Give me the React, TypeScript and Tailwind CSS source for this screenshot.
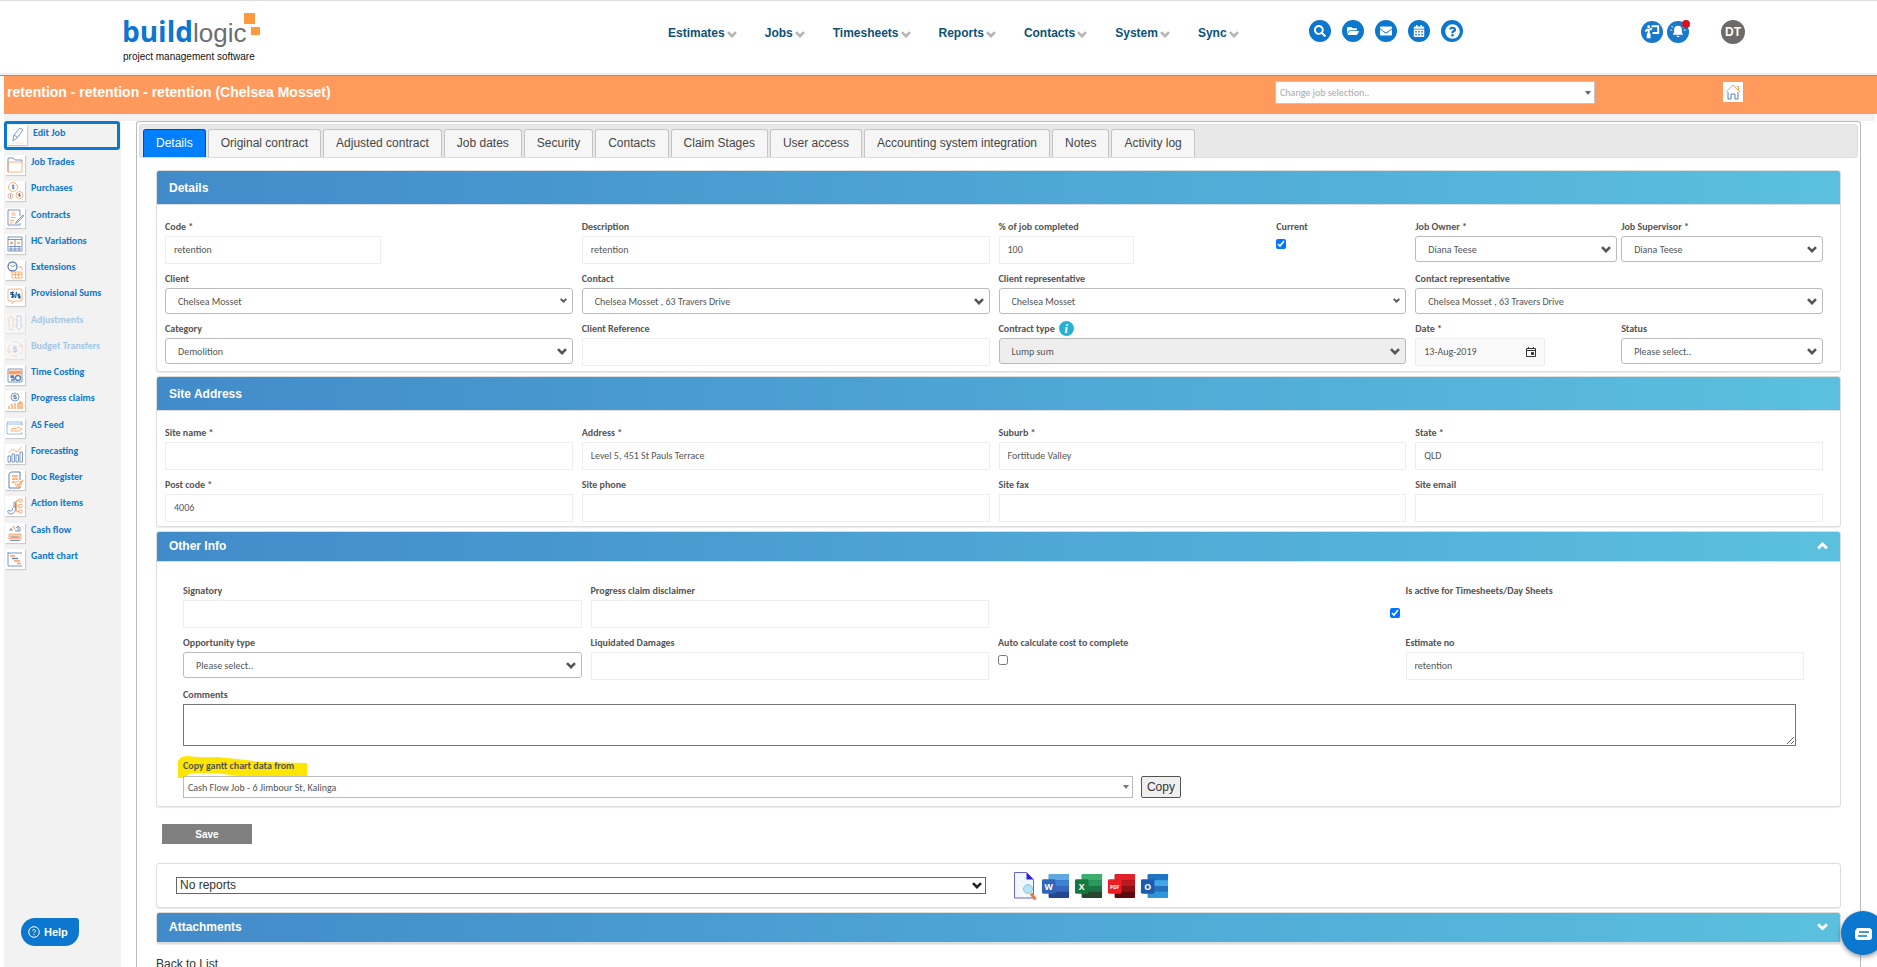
import type { ReactNode } from "react";
import clsx from "clsx";
import { FaSearch, FaFolderOpen, FaEnvelope, FaCalendarAlt, FaQuestionCircle } from "react-icons/fa";

const BLUE = "#5b7fb5";
const ORANGE = "#ff9d5c";

const menus = ["Estimates", "Jobs", "Timesheets", "Reports", "Contacts", "System", "Sync"];

const tabs = [
  "Details",
  "Original contract",
  "Adjusted contract",
  "Job dates",
  "Security",
  "Contacts",
  "Claim Stages",
  "User access",
  "Accounting system integration",
  "Notes",
  "Activity log",
];

const shortcuts = [
  { icon: <FaSearch />, title: "Search" },
  { icon: <FaFolderOpen />, title: "Files" },
  { icon: <FaEnvelope />, title: "Messages" },
  { icon: <FaCalendarAlt />, title: "Calendar" },
  { icon: <FaQuestionCircle className="text-[15px]" />, title: "Help" },
];

const sideLinks: { title: string; icon: ReactNode; disabled?: boolean }[] = [
  {
    title: "Job Trades",
    icon: (
      <>
        <path d="M3 17V3h5l2 2h7v2" stroke={BLUE} />
        <path d="M3 7h14v10H3z" stroke={ORANGE} />
      </>
    ),
  },
  {
    title: "Purchases",
    icon: (
      <>
        <circle cx="8" cy="6" r="4.500" stroke={ORANGE} />
        <circle cx="5.500" cy="15" r="2.500" stroke={ORANGE} />
        <circle cx="14.500" cy="14" r="3.500" stroke={ORANGE} />
        <path d="M9.500 4.500h-2v1.500h1.500v1.500h-2M8 3.500v5M5.500 13.500v3M14.500 12v4M15.500 13h-2v1h2v1h-2" stroke={BLUE} />
      </>
    ),
  },
  {
    title: "Contracts",
    icon: (
      <>
        <path d="M15 8V2H3v15h12v-2" stroke={BLUE} />
        <circle cx="8.500" cy="6" r="1.500" stroke={ORANGE} />
        <path d="M6 9.500h5M5 12.500h4M5 15h3" stroke={ORANGE} />
        <path d="M18 7l-6 6-1.500 2.500L13 14l5.500-6z" stroke={BLUE} />
      </>
    ),
  },
  {
    title: "HC Variations",
    icon: (
      <>
        <path d="M3 3h14v14H3zM3 5.500h14M10 6v11M4 12.500h12M4 15h12M6 12v5M14 12v5" stroke={BLUE} />
        <path d="M5 9h3M6.500 7.500v3M12 9h3" stroke={ORANGE} strokeWidth="1.500" />
      </>
    ),
  },
  {
    title: "Extensions",
    icon: (
      <>
        <circle cx="7.500" cy="6.500" r="4.500" stroke={BLUE} strokeWidth="1.300" />
        <path d="M5.500 5l2 2 3-2" stroke={BLUE} />
        <path d="M7 12h10v6H7zM7 14.500h10M10.500 12v6M13.500 12v6M13 7h4v3" stroke={ORANGE} />
      </>
    ),
  },
  {
    title: "Provisional Sums",
    icon: (
      <>
        <path d="M4 3h12l1 1v10l-1 1h-6l-3 2.500V15H4l-1-1V4z" stroke={ORANGE} />
        <path d="M9 6.500H6v2h3v2.500H6M7.500 5.500v6.500M11.500 6l-1 6M15 8.500h-2v1.500h2V12h-2M14 7.500v5" stroke="#1d5c96" strokeWidth="1.200" />
      </>
    ),
  },
  {
    title: "Adjustments",
    disabled: true,
    icon: (
      <>
        <path d="M6 3l3.500 4H8v9.500H4V7H2.500z" stroke={ORANGE} />
        <path d="M14 17l3.500-4H16V3h-4v10h-1.500z" stroke={BLUE} />
      </>
    ),
  },
  {
    title: "Budget Transfers",
    disabled: true,
    icon: (
      <>
        <path d="M4 13a6.500 6.500 0 0 1 1-7M16 6a6.500 6.500 0 0 1-1 9M5 15a6.500 6.500 0 0 0 7 2M15 5a6.500 6.500 0 0 0-7-2M2 11l2 3 2-2M14 8l2-3 2 3" stroke={ORANGE} />
        <path d="M12 8H8.500v2H12v2.500H8M10 6.500v7.500" stroke={BLUE} />
      </>
    ),
  },
  {
    title: "Time Costing",
    icon: (
      <>
        <path d="M3 4h14v13H3z" stroke={BLUE} />
        <path d="M4 6h12v3H4z" stroke={ORANGE} fill={ORANGE} />
        <path d="M9 11H6v1.500h3V15H6" stroke={BLUE} strokeWidth="1.300" />
        <circle cx="13" cy="13" r="2.500" stroke={BLUE} strokeWidth="1.300" />
      </>
    ),
  },
  {
    title: "Progress claims",
    icon: (
      <>
        <circle cx="10" cy="6" r="4" stroke={BLUE} />
        <path d="M11.500 4.500h-3V6h3v1.500h-3M10 3.500v5" stroke={BLUE} />
        <path d="M4 18v-3M7 18v-4l-1-1M10 18v-6M13 18v-5l2-2v7M17 18v-6l-1-1" stroke={ORANGE} strokeWidth="1.300" />
      </>
    ),
  },
  {
    title: "AS Feed",
    icon: (
      <>
        <path d="M17 8V4H2v12h15v-2M2 6h15" stroke="#86aed4" />
        <path d="M6 13h8l3-2-4-2-2 1.500H7z" stroke={ORANGE} />
      </>
    ),
  },
  {
    title: "Forecasting",
    icon: (
      <>
        <path d="M3 18v-6h2.500v6zM7 18v-8h2.500v8zM11 18v-7h2.500v7zM15 18V8h2.500v10z" stroke={BLUE} />
        <path d="M3.500 9L8 5l4 3 4.500-5" stroke={ORANGE} />
      </>
    ),
  },
  {
    title: "Doc Register",
    icon: (
      <>
        <path d="M15 10V2H6L4 4v14h11v-1" stroke="#3d6698" />
        <path d="M7 6h6M7 9h6M7 12h3" stroke={ORANGE} strokeWidth="1.500" />
        <circle cx="13.500" cy="14" r="3" stroke={ORANGE} />
        <path d="M12 14l1.500 1.500L18 10" stroke={ORANGE} strokeWidth="1.300" />
      </>
    ),
  },
  {
    title: "Action items",
    icon: (
      <>
        <path d="M14 3h3v3h-3zM14 8.500h3v3h-3zM14 14h3v3h-3zM14 4.500h-2.500v11H14M9 10h5" stroke={ORANGE} />
        <path d="M9 12V6.500c0-1 1.500-1 1.500 0V13c0 3-2 5-5 5-2 0-3.500-2-2.500-3.500l3 .5c1 0 2-1.500 1.500-3" stroke={BLUE} />
      </>
    ),
  },
  {
    title: "Cash flow",
    icon: (
      <>
        <path d="M5 8V6h2v2M13 3v5M11 5l2-2 2 2v3h-5" stroke={BLUE} />
        <path d="M7 5l2-2 1 4" stroke={ORANGE} />
        <path d="M4 11h12v5H4z" stroke={ORANGE} fill="#ffd3b5" />
        <path d="M6 14h8M5 17.500h10" stroke={BLUE} />
      </>
    ),
  },
  {
    title: "Gantt chart",
    icon: (
      <>
        <path d="M3 3v14h14M3 4h14" stroke={BLUE} />
        <path d="M5 7h5M9 12h6M12 14.500h4" stroke={ORANGE} strokeWidth="1.300" />
        <path d="M7 9.500h6" stroke={BLUE} strokeWidth="1.300" />
      </>
    ),
  },
];

function Chevron({ className }: { className?: string }) {
  return (
    <svg viewBox="0 0 10 7" fill="none" stroke="currentColor" strokeWidth="2.6" className={className}>
      <path d="M1 1.200l4 4 4-4" />
    </svg>
  );
}

function SideIcon({ children }: { children: ReactNode }) {
  return (
    <svg viewBox="0 0 20 20" fill="none" strokeWidth="0.8" className="size-5 shrink-0 bg-white shadow-[1px_1px_1px_#ccc]">
      {children}
    </svg>
  );
}

function Field({ label, id, className, extra, children }: { label: string; id: string; className?: string; extra?: ReactNode; children: ReactNode }) {
  return (
    <div className={className}>
      <div className="flex h-[19px] items-center gap-1">
        <label htmlFor={id} className="font-bold whitespace-nowrap">
          {label}
        </label>
        {extra}
      </div>
      {children}
    </div>
  );
}

function TextBox({ id, value = "", className = "w-full" }: { id: string; value?: string; className?: string }) {
  return <input id={id} type="text" defaultValue={value} className={clsx("block h-7 border border-[#eee] px-2 pb-0.5", className)} />;
}

function SelectBox({ id, value, disabled, small }: { id: string; value: string; disabled?: boolean; small?: boolean }) {
  return (
    <div className="relative">
      <select
        id={id}
        disabled={disabled}
        className="block h-[26px] w-full appearance-none rounded-[3px] border border-[#bbb] bg-white px-3 disabled:bg-[#eee]"
      >
        <option>{value}</option>
      </select>
      <Chevron className={clsx("pointer-events-none absolute top-[10px] right-1.5", small ? "w-[7px]" : "w-[10px]")} />
    </div>
  );
}

function CheckBox({ id, checked, className }: { id: string; checked?: boolean; className?: string }) {
  return <input id={id} type="checkbox" defaultChecked={checked} className={clsx("block size-[10px]", className)} />;
}

function Panel({ title, arrow, slim, children }: { title: string; arrow?: "up" | "down"; slim?: boolean; children?: ReactNode }) {
  return (
    <section className="mb-1 rounded-[3px] border border-[#ddd] shadow-[0_1px_1px_rgba(0,0,0,0.08)]">
      <div
        className={clsx(
          "flex items-center justify-between rounded-t-[2px] border-b border-[#ddd] bg-linear-to-r from-[#428bca] to-[#5bc0de] px-3 font-[Liberation_Sans,sans-serif] text-white",
          slim ? "h-[30px] pb-0.5" : "h-[34px]"
        )}
      >
        <h2 className="text-xs font-bold">{title}</h2>
        {arrow && (
          <button type="button" aria-label={`Toggle ${title}`}>
            <Chevron className={clsx("w-[11px]", arrow === "up" && "rotate-180")} />
          </button>
        )}
      </div>
      {children}
    </section>
  );
}

function OfficeIcon({ letter, colors, badge }: { letter: string; colors: string[]; badge: string }) {
  return (
    <svg viewBox="0 0 30 26" className="h-[26px] w-[29px]">
      <rect x="8" y="0.500" width="21" height="25" rx="1.500" fill={colors[2]} />
      <path d="M9.500 0.500h18A1.500 1.500 0 0 1 29 2v5H8V2A1.500 1.500 0 0 1 9.500 0.500z" fill={colors[0]} />
      <path d="M8 7h21v6H8z" fill={colors[1]} />
      <path d="M8 19h21v5a1.500 1.500 0 0 1-1.500 1.500h-18A1.500 1.500 0 0 1 8 24z" fill={colors[3]} />
      <rect x="1" y="6" width="14" height="15" rx="1.500" fill={badge} />
      <text x="8" y={letter.length > 1 ? 16 : 17} textAnchor="middle" fill="#fff" fontFamily="Open Sans, sans-serif" fontWeight="bold" fontSize={letter.length > 1 ? 5 : 9}>
        {letter}
      </text>
    </svg>
  );
}

function Header() {
  return (
    <header className="grid h-[76px] shrink-0 grid-cols-[668fr_641fr_332fr_236fr] items-start border-t border-b border-t-[#ddd] border-b-[#8c9499] bg-white shadow-[inset_0_-2px_0_#eee]">
      <a href="#" className="ml-[122px] mt-3 block justify-self-start">
        <svg viewBox="0 0 140 54" className="h-[54px] w-[140px]">
          <text x="0" y="29" fontFamily="Open Sans, sans-serif" fontWeight="bold" fontSize="28" fill="#0c77ce">build</text>
          <text x="71" y="29" fontFamily="Liberation Sans, sans-serif" fontSize="26" fill="#6d6e70">logic</text>
          <path d="M122 0h11v11h-11zM129 14h9v8h-9z" fill="#ff9a3c" />
          <text x="1" y="47" fontFamily="Liberation Sans, sans-serif" fontSize="10" fill="#111">project management software</text>
        </svg>
      </a>
      <nav className="mt-6 flex gap-7">
        {menus.map((menu) => (
          <a key={menu} href="#" className="flex items-center gap-0.5 text-xs font-bold text-[#0c5179]">
            {menu}
            <Chevron className="mt-0.5 w-[10px] text-[#b5b5b5]" />
          </a>
        ))}
      </nav>
      <div className="mt-[19px] flex gap-[11px]">
        {shortcuts.map((s) => (
          <button key={s.title} type="button" title={s.title} className="flex size-[22px] items-center justify-center rounded-full bg-[#0c77ce] text-xs text-white">
            {s.icon}
          </button>
        ))}
      </div>
      <div className="mt-[19px] flex items-center">
        <button type="button" title="Training" className="size-[22px] rounded-full bg-[#1878cc]">
          <svg viewBox="0 0 23 23" fill="none" stroke="#fff">
            <circle cx="8" cy="6" r="1.500" fill="#fff" stroke="none" />
            <path d="M4.500 11l2-2h3l2-1.500M8 9v5M7 13v5M9 13v5" strokeWidth="2" />
            <path d="M11 5.500h7v7h-6" strokeWidth="2" />
          </svg>
        </button>
        <button type="button" title="Notifications" className="relative ml-1 size-[22px] rounded-full bg-[#1878cc]">
          <svg viewBox="0 0 23 23">
            <path d="M11.500 5a4 4 0 0 1 4 4c0 4 .5 4 1.500 5.500H6C7 13 7.500 13 7.500 9a4 4 0 0 1 4-4zM10 15.500h3a1.500 1.500 0 0 1-3 0z" fill="#fff" />
            <path d="M3.500 9.500h2M17.500 9.500h2M4.500 5.500l2 1M18.500 5.500l-2 1" stroke="#fff" />
          </svg>
          <span className="absolute -top-px -right-px size-2 rounded-full bg-[#d9101f]" />
        </button>
        <button type="button" className="ml-8 size-6 rounded-full bg-[#6b6b6b] text-xs font-bold text-white">DT</button>
      </div>
    </header>
  );
}

function JobBar() {
  return (
    <div className="grid h-[38px] shrink-0 grid-cols-[1271fr_448fr_154fr] bg-[#ff9a5c]">
      <h1 className="pt-1.5 pl-[3px] text-sm font-bold text-white">retention - retention - retention (Chelsea Mosset)</h1>
      <div className="relative mt-[5px] h-[23px] w-5/7 font-[Carlito,Lato,sans-serif]">
        <select aria-label="Change job" className="block h-full w-full appearance-none border border-[#c5c5c5] bg-white px-1 text-[10px] text-[#aaa]">
          <option>Change job selection..</option>
        </select>
        <span className="pointer-events-none absolute top-[10px] right-1 border-x-[3px] border-t-4 border-x-transparent border-t-[#666]" />
      </div>
      <a href="#" title="Home" className="mt-1.5 block size-5 bg-white">
        <svg viewBox="0 0 20 20" fill="none">
          <path d="M3 10l7-7 7 7M14 4.500h1.500V8" stroke={ORANGE} />
          <path d="M5 10v7h3v-5h4v5h3v-7" stroke={BLUE} />
        </svg>
      </a>
    </div>
  );
}

function Sidebar() {
  return (
    <aside className="w-[117px] shrink-0 bg-[#f2f2f2] font-[Carlito,Lato,sans-serif] text-[10px] font-bold text-[#0c77ce]">
      <a href="#" className="flex h-[29px] w-[116px] gap-1.5 rounded-[3px] border-3 border-[#0c77ce] pt-px leading-4">
        <SideIcon>
          <path d="M6 14l1-4 6-7 3 2-6 8-4 3zM7 10l3 2" stroke={BLUE} />
          <path d="M5 18h12" stroke="#ffd9bf" />
        </SideIcon>
        Edit Job
      </a>
      <ul className="flex h-[425px] flex-col pt-[5px] pl-px">
        {sideLinks.map((link) => (
          <li key={link.title} className={clsx("flex-1", link.disabled && "opacity-35")}>
            <a href="#" className="flex gap-1.5 leading-[14px]">
              <SideIcon>{link.icon}</SideIcon>
              {link.title}
            </a>
          </li>
        ))}
      </ul>
    </aside>
  );
}

function DetailsPanel() {
  return (
    <Panel title="Details">
      <div className="grid grid-cols-4 gap-x-[9px] gap-y-[5px] pt-3 pr-[17px] pb-[5px] pl-2">
        <Field label="Code *" id="code"><TextBox id="code" value="retention" className="w-[53%]" /></Field>
        <Field label="Description" id="description"><TextBox id="description" value="retention" /></Field>
        <div className="grid grid-cols-[2fr_1fr]">
          <Field label="% of job completed" id="completed"><TextBox id="completed" value="100" className="w-1/2" /></Field>
          <Field label="Current" id="current" className="pl-1.5"><CheckBox id="current" checked className="mt-[3px]" /></Field>
        </div>
        <div className="grid grid-cols-2 gap-1">
          <Field label="Job Owner *" id="owner"><SelectBox id="owner" value="Diana Teese" /></Field>
          <Field label="Job Supervisor *" id="supervisor"><SelectBox id="supervisor" value="Diana Teese" /></Field>
        </div>

        <Field label="Client" id="client"><SelectBox id="client" value="Chelsea Mosset" small /></Field>
        <Field label="Contact" id="contact"><SelectBox id="contact" value="Chelsea Mosset , 63 Travers Drive" /></Field>
        <Field label="Client representative" id="clientRep"><SelectBox id="clientRep" value="Chelsea Mosset" small /></Field>
        <Field label="Contact representative" id="contactRep"><SelectBox id="contactRep" value="Chelsea Mosset , 63 Travers Drive" /></Field>

        <Field label="Category" id="category"><SelectBox id="category" value="Demolition" /></Field>
        <Field label="Client Reference" id="clientRef"><TextBox id="clientRef" /></Field>
        <Field
          label="Contract type"
          id="contractType"
          extra={
            <span className="flex size-[15px] items-center justify-center rounded-full bg-[#27b1d6] font-[Liberation_Serif,serif] text-xs font-bold text-white italic">i</span>
          }
        >
          <SelectBox id="contractType" value="Lump sum" disabled />
        </Field>
        <div className="grid grid-cols-2 gap-1">
          <Field label="Date *" id="date">
            <div className="relative w-[130px]">
              <input id="date" type="text" defaultValue="13-Aug-2019" className="block h-7 w-full border border-[#eee] bg-[#fafafa] px-2 pb-0.5" />
              <svg viewBox="0 0 12 12" fill="none" stroke="#333" className="absolute top-2 right-2 size-3">
                <path d="M1.500 2.500h9v8h-9zM1.500 4.500h9M3.500 1v2M8.500 1v2" />
                <path d="M6.500 6.500h2v2h-2z" fill="#333" />
              </svg>
            </div>
          </Field>
          <Field label="Status" id="status"><SelectBox id="status" value="Please select.." /></Field>
        </div>
      </div>
    </Panel>
  );
}

function AddressPanel() {
  return (
    <Panel title="Site Address">
      <div className="grid grid-cols-4 gap-x-[9px] gap-y-[5px] pt-3 pr-[17px] pb-1 pl-2">
        <Field label="Site name *" id="siteName"><TextBox id="siteName" /></Field>
        <Field label="Address *" id="address"><TextBox id="address" value="Level 5, 451 St Pauls Terrace" /></Field>
        <Field label="Suburb *" id="suburb"><TextBox id="suburb" value="Fortitude Valley" /></Field>
        <Field label="State *" id="state"><TextBox id="state" value="QLD" /></Field>
        <Field label="Post code *" id="postCode"><TextBox id="postCode" value="4006" /></Field>
        <Field label="Site phone" id="sitePhone"><TextBox id="sitePhone" /></Field>
        <Field label="Site fax" id="siteFax"><TextBox id="siteFax" /></Field>
        <Field label="Site email" id="siteEmail"><TextBox id="siteEmail" /></Field>
      </div>
    </Panel>
  );
}

function OtherPanel() {
  return (
    <Panel title="Other Info" arrow="up" slim>
      <div className="pt-[19px] pr-9 pb-2 pl-[26px]">
        <div className="grid grid-cols-4 gap-x-[9px] gap-y-[5px]">
          <Field label="Signatory" id="signatory"><TextBox id="signatory" /></Field>
          <Field label="Progress claim disclaimer" id="disclaimer"><TextBox id="disclaimer" /></Field>
          <Field label="Is active for Timesheets/Day Sheets" id="active" className="col-start-4">
            <CheckBox id="active" checked className="mt-2 -ml-4" />
          </Field>
          <Field label="Opportunity type" id="opportunity"><SelectBox id="opportunity" value="Please select.." /></Field>
          <Field label="Liquidated Damages" id="damages"><TextBox id="damages" /></Field>
          <Field label="Auto calculate cost to complete" id="autoCalc"><CheckBox id="autoCalc" className="mt-[3px]" /></Field>
          <Field label="Estimate no" id="estimateNo"><TextBox id="estimateNo" value="retention" /></Field>
        </div>
        <Field label="Comments" id="comments" className="mt-[5px] mr-2">
          <textarea id="comments" className="block h-[42px] w-full border border-[#767676]" />
        </Field>
        <div className="relative mt-[10px]">
          {/* highlighter stroke behind the label */}
          <svg viewBox="0 0 129 23" className="absolute top-0 -left-[5px] h-[23px] w-[129px]">
            <path d="M0 5q2-5 10-5 12 2 30 1 20 2 45 5l44 1v15H80Q60 20 45 18q-20-2-34 0l-4 4H0z" fill="#ffe600" />
          </svg>
          <Field label="Copy gantt chart data from" id="gantt" className="relative">
            <div className="mt-px flex gap-2">
              <div className="relative w-[58.6%]">
                <select id="gantt" className="block h-[22px] w-full appearance-none border border-[#bbb] bg-white px-1">
                  <option>Cash Flow Job - 6 Jimbour St, Kalinga</option>
                </select>
                <span className="pointer-events-none absolute top-[9px] right-1 border-x-[3px] border-t-4 border-x-transparent border-t-[#777]" />
              </div>
              <button type="button" className="h-[22px] rounded-[2px] border border-[#555] bg-[#efefef] px-[5px] font-[Liberation_Sans,sans-serif] text-xs text-[#333]">
                Copy
              </button>
            </div>
          </Field>
        </div>
      </div>
    </Panel>
  );
}

function ReportBar() {
  return (
    <div className="mt-[19px] mb-1 flex h-[45px] items-center rounded-[3px] border border-[#ddd] pl-[19px] shadow-[0_1px_1px_rgba(0,0,0,0.08)]">
      <div className="relative w-[48.7%]">
        <select aria-label="Report" className="block h-[17px] w-full appearance-none border border-[#666] bg-white px-[3px] text-xs leading-[15px] text-[#333]">
          <option>No reports</option>
        </select>
        <Chevron className="pointer-events-none absolute top-[5px] right-1 w-[10px] text-[#222]" />
      </div>
      <div className="ml-[27px] flex items-center gap-1">
        <button type="button" title="Preview">
          <svg viewBox="0 0 24 30" fill="none" className="h-[30px] w-6">
            <path d="M1.500 1.500h12l7 7V27h-19z" fill="#f2f8ff" stroke="#6a62d8" />
            <path d="M13.500 1.500v7h7z" fill="#2a22e0" />
            <circle cx="15" cy="18" r="4.500" fill="#b5e2f5" stroke="#8fc6e0" />
            <path d="M18 22.500l4.500 6" stroke="#d98447" strokeWidth="3" />
          </svg>
        </button>
        <button type="button" title="Word"><OfficeIcon letter="W" badge="#2f66b8" colors={["#5fa8e0", "#3f82d2", "#3569bd", "#26478f"]} /></button>
        <button type="button" title="Excel"><OfficeIcon letter="X" badge="#15793f" colors={["#3dae6e", "#2a9a5c", "#1c7544", "#28472f"]} /></button>
        <button type="button" title="PDF"><OfficeIcon letter="PDF" badge="#ee1c25" colors={["#e2222a", "#b81a20", "#8f1216", "#5c0a0c"]} /></button>
        <button type="button" title="Outlook"><OfficeIcon letter="O" badge="#1c5cae" colors={["#1f74c4", "#40a8e6", "#2472c0", "#3097dc"]} /></button>
      </div>
    </div>
  );
}

export default function App() {
  return (
    <div className="relative flex h-screen flex-col overflow-hidden bg-white font-[Liberation_Sans,sans-serif] text-[#333]">
      <Header />
      <div className="flex min-h-0 flex-1 flex-col pl-1">
        <JobBar />
        <div className="mr-0.5 h-[7px] shrink-0 bg-[#f2f2f2]" />
        <div className="flex min-h-0 flex-1">
          <Sidebar />
          <main className="mr-4 ml-[15px] min-w-0 flex-1 rounded-t-[3px] border border-b-0 border-[#bbb] px-0.5 pt-0.5">
            <div role="tablist" className="flex h-[34px] gap-0.5 rounded-[3px] border border-[#ddd] bg-[#e8e8e8] pt-1 pl-[3px]">
              {tabs.map((tab, i) => (
                <button
                  key={tab}
                  type="button"
                  role="tab"
                  aria-selected={i === 0}
                  className={clsx(
                    "rounded-t-[3px] border border-b-0 px-3 pb-0.5 text-xs whitespace-nowrap",
                    i === 0 ? "border-[#003eff] bg-[#007fff] text-white" : "border-[#c5c5c5] bg-[#f6f6f6] text-[#454545]"
                  )}
                >
                  {tab}
                </button>
              ))}
            </div>
            <div className="mt-3 mr-[17px] ml-[17px]">
              <div className="font-[Carlito,Lato,sans-serif] text-[10px] text-[#555]">
                <DetailsPanel />
                <AddressPanel />
                <OtherPanel />
              </div>
              <button type="button" className="mt-[17px] ml-1.5 block h-5 w-[90px] bg-[#808080] text-[10px] font-bold text-white">Save</button>
              <ReportBar />
              <Panel title="Attachments" arrow="down" slim />
              <a href="#" className="mt-3 block text-xs">Back to List</a>
            </div>
          </main>
        </div>
      </div>
      <button type="button" className="fixed bottom-[21px] left-[21px] flex h-7 w-[58px] items-center gap-1 rounded-[14px] rounded-tr-[3px] bg-[#0c77ce] pl-[7px] text-[11px] font-bold text-white">
        <svg viewBox="0 0 12 12" fill="none" stroke="#fff" className="size-3">
          <circle cx="6" cy="6" r="5.300" />
          <path d="M4.500 5c0-2 3-2 3 0 0 1-1.500 1-1.500 2M6 8v1" />
        </svg>
        Help
      </button>
      <button type="button" title="Chat" className="fixed -right-2 bottom-3 size-11 rounded-full bg-[#0c77ce] shadow-[0_2px_5px_rgba(0,0,0,0.4)]">
        <svg viewBox="0 0 44 44">
          <path d="M16 17h13l2 2v7a3 3 0 0 1-3 3H17a3 3 0 0 1-3-3v-6z" fill="#fff" />
          <path d="M18 21h10M17 25h9" stroke="#0c77ce" strokeWidth="1.500" />
        </svg>
      </button>
    </div>
  );
}
